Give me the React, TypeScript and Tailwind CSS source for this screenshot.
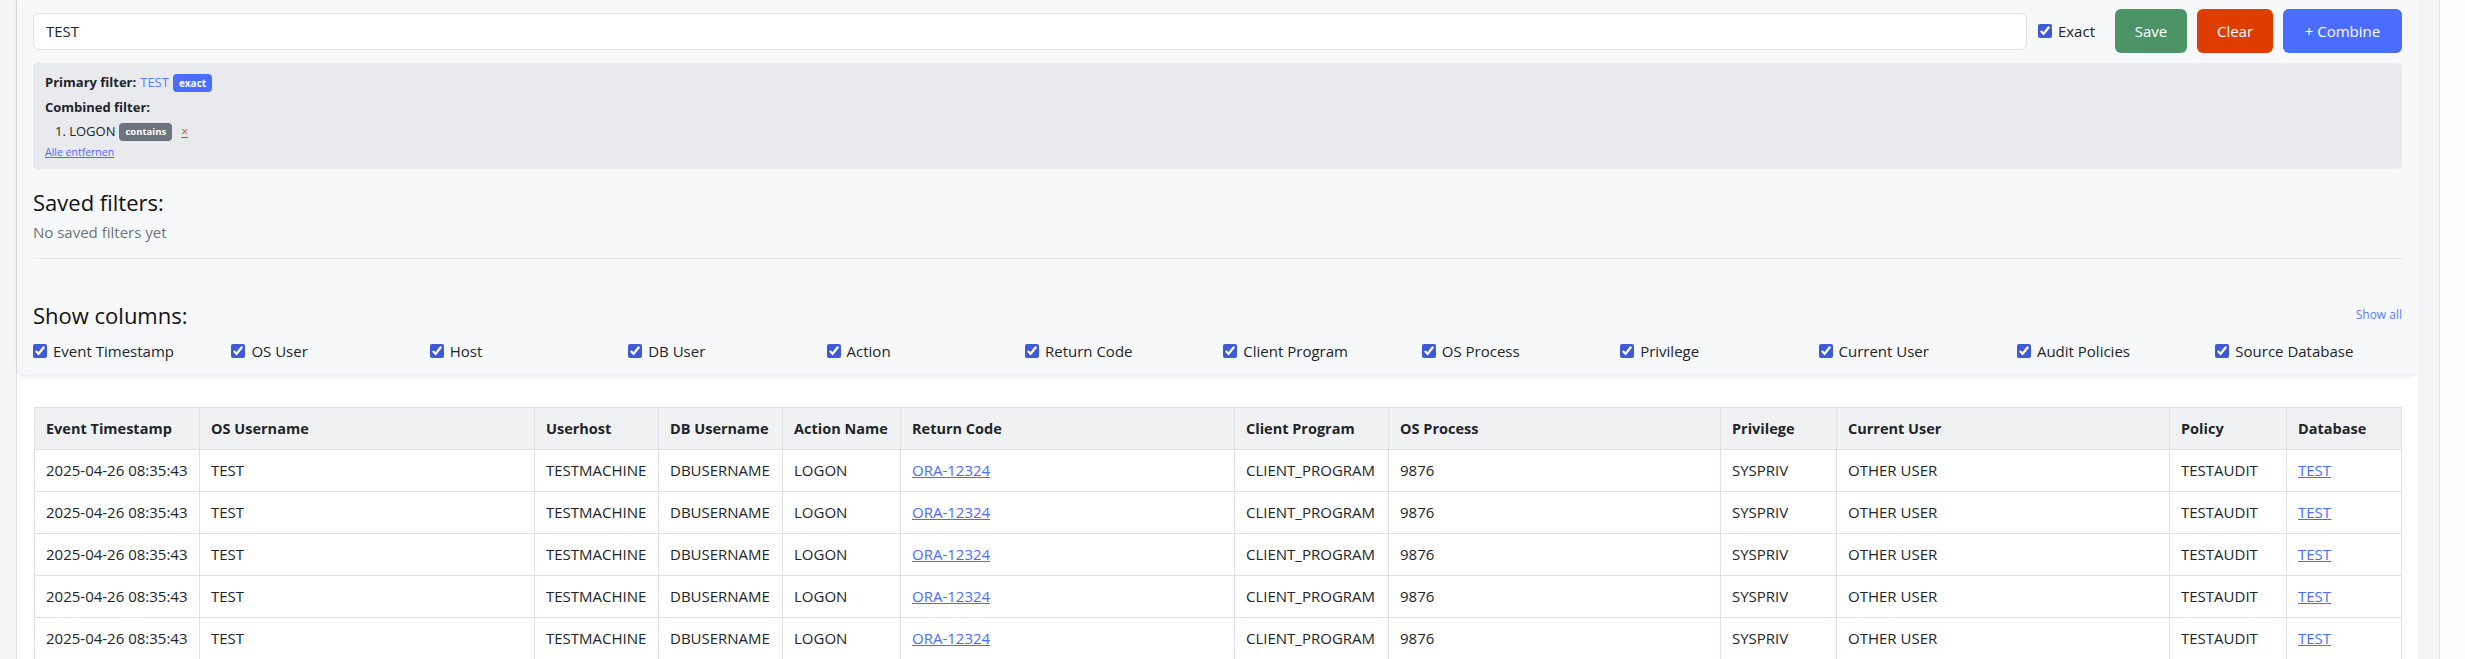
import React from 'react';

// Spalten der Audit-Tabelle (Breiten aus dem Layout)
const COLUMNS = [
    { label: 'Event Timestamp', w: 'w-[165px]' },
    { label: 'OS Username', w: 'w-[335px]' },
    { label: 'Userhost', w: 'w-[124px]' },
    { label: 'DB Username', w: 'w-[124px]' },
    { label: 'Action Name', w: 'w-[118px]' },
    { label: 'Return Code', w: 'w-[334px]' },
    { label: 'Client Program', w: 'w-[154px]' },
    { label: 'OS Process', w: 'w-[332px]' },
    { label: 'Privilege', w: 'w-[116px]' },
    { label: 'Current User', w: 'w-[333px]' },
    { label: 'Policy', w: 'w-[117px]' },
    { label: 'Database', w: 'w-[115px]' },
];

const TOGGLES = [
    'Event Timestamp', 'OS User', 'Host', 'DB User', 'Action', 'Return Code',
    'Client Program', 'OS Process', 'Privilege', 'Current User', 'Audit Policies', 'Source Database',
];

interface AuditRow {
    timestamp: string;
    osUser: string;
    host: string;
    dbUser: string;
    action: string;
    returnCode: string;
    client: string;
    osProcess: string;
    privilege: string;
    currentUser: string;
    policy: string;
    database: string;
}

const rows: AuditRow[] = Array.from({ length: 5 }, () => ({
    timestamp: '2025-04-26 08:35:43',
    osUser: 'TEST',
    host: 'TESTMACHINE',
    dbUser: 'DBUSERNAME',
    action: 'LOGON',
    returnCode: 'ORA-12324',
    client: 'CLIENT_PROGRAM',
    osProcess: '9876',
    privilege: 'SYSPRIV',
    currentUser: 'OTHER USER',
    policy: 'TESTAUDIT',
    database: 'TEST',
}));

const FilterPanel: React.FC = () => {
    return (
        <section className="bg-[#f7f8fa] rounded-b-lg shadow-[0_2px_4px_rgba(0,0,0,0.08)] px-4 pt-[9px] pb-[14px]">
            {/* Suchzeile */}
            <div className="flex items-center h-[44px]">
                <input
                    readOnly
                    value="TEST"
                    className="flex-1 h-[37px] rounded-md border border-[#dee2e6] bg-white px-3 text-[15px] text-[#212529] outline-none"
                />
                <label className="flex items-center gap-[6px] ml-[11px] text-[15px] text-[#212529]">
                    <input type="checkbox" defaultChecked className="w-[14px] h-[14px] m-0 accent-[#3f5ad8]" />
                    Exact
                </label>
                <button className="ml-[20px] w-[72px] h-[44px] rounded-md bg-[#4c9368] text-white text-[15px]">Save</button>
                <button className="ml-[10px] w-[76px] h-[44px] rounded-md bg-[#df3c00] text-white text-[15px]">Clear</button>
                <button className="ml-[10px] w-[119px] h-[44px] rounded-md bg-[#4a6cff] text-white text-[15px]">+ Combine</button>
            </div>

            {/* aktive Filter */}
            <div className="mt-[10px] h-[106px] rounded bg-[#e9eaee] pl-3 pt-[11px] text-[13px] text-[#212529]">
                <div className="flex items-center h-[18px]">
                    <span className="font-bold">Primary filter:</span>
                    <span className="ml-[4px] text-[#5b7bff]">TEST</span>
                    <span className="ml-[4px] h-[18px] flex items-center rounded-[4px] bg-[#4a6cff] px-[6px] text-[10px] font-bold text-white">exact</span>
                </div>
                <div className="mt-[7px] h-[18px] flex items-center font-bold">Combined filter:</div>
                <div className="mt-[6px] h-[18px] flex items-center pl-[10px] text-[13px]">
                    <span>1. LOGON</span>
                    <span className="ml-[4px] h-[18px] flex items-center rounded-[4px] bg-[#6c757d] px-[6px] text-[9.5px] font-bold text-white">contains</span>
                    <span className="ml-[9px] text-[#dc3545] underline text-[12px] leading-none">×</span>
                </div>
                <div className="mt-[4px] h-[16px] flex items-center">
                    <a className="text-[10.5px] text-[#4a6cff] underline">Alle entfernen</a>
                </div>
            </div>

            {/* gespeicherte Filter */}
            <h2 className="mt-[20px] text-[22px] leading-[26px] text-[#111]">Saved filters:</h2>
            <p className="mt-[7px] text-[15px] leading-[20px] text-[#6c757d]">No saved filters yet</p>
            <hr className="mt-[16px] border-0 border-t border-[#e3e5e8]" />

            {/* Spaltenauswahl */}
            <div className="mt-[43px] flex items-center justify-between">
                <h2 className="text-[22px] leading-[26px] text-[#111]">Show columns:</h2>
                <a className="text-[12px] text-[#5b7bff]">Show all</a>
            </div>
            <div className="mt-[13px] flex h-[20px] items-center">
                {TOGGLES.map(name => (
                    <label key={name} className="flex shrink-0 w-[198.4px] items-center gap-[6px] text-[15px] leading-[20px] text-[#212529]">
                        <input type="checkbox" defaultChecked className="w-[14px] h-[14px] m-0 accent-[#3f5ad8]" />
                        {name}
                    </label>
                ))}
            </div>
        </section>
    );
};

const AuditTable: React.FC = () => {
    const cell = 'h-[42px] px-[11px] border border-[#dee2e6] whitespace-nowrap';
    const link = 'text-[#4a6cff] underline';
    return (
        <div className="px-[17px] pt-[32px]">
            <table className="w-[2367px] table-fixed border-collapse text-[15px] text-[#212529]">
                <thead>
                    <tr className="bg-[#eff1f3]">
                        {COLUMNS.map(c => (
                            <th key={c.label} className={`${cell} ${c.w} text-left font-bold text-[14.5px]`}>{c.label}</th>
                        ))}
                    </tr>
                </thead>
                <tbody>
                    {rows.map((r, i) => (
                        <tr key={i} className="bg-white">
                            <td className={cell}>{r.timestamp}</td>
                            <td className={cell}>{r.osUser}</td>
                            <td className={cell}>{r.host}</td>
                            <td className={cell}>{r.dbUser}</td>
                            <td className={cell}>{r.action}</td>
                            <td className={cell}><a className={link}>{r.returnCode}</a></td>
                            <td className={cell}>{r.client}</td>
                            <td className={cell}>{r.osProcess}</td>
                            <td className={cell}>{r.privilege}</td>
                            <td className={cell}>{r.currentUser}</td>
                            <td className={cell}>{r.policy}</td>
                            <td className={cell}><a className={link}>{r.database}</a></td>
                        </tr>
                    ))}
                </tbody>
            </table>
        </div>
    );
}

export default function App() {
    return (
        <div className="flex w-full min-h-screen overflow-hidden bg-[#f3f4f6] font-['Open_Sans','Noto_Sans',sans-serif]">
            <div className="w-[17px] shrink-0 bg-[#f4f5f7] border-r border-[#dcdfe3]" />
            <main className="w-[2401px] shrink-0 bg-white">
                <FilterPanel />
                <AuditTable />
            </main>
            <div className="w-[21px] shrink-0 bg-[#f4f5f7]" />
            <div className="flex-1 bg-[#fbfbfb] border-l border-[#e6e6e6]" />
        </div>
    );
}
